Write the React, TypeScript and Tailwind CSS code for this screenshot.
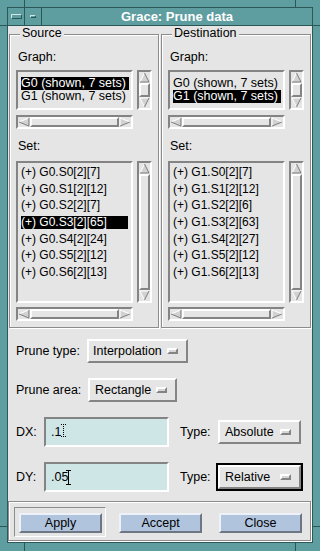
import React from "react";

const raised = "border-2 border-t-white border-l-white border-r-[#848484] border-b-[#848484]";
const sunken = "border-2 border-t-[#848484] border-l-[#848484] border-r-white border-b-white";
const etched = "border border-[#8c8c8c] shadow-[inset_1px_1px_0_#ffffff,1px_1px_0_#ffffff]";

type Dir = "up" | "down" | "left" | "right";

const arrowShapes: Record<Dir, { fill: string; light: string; dark: string }> = {
  up: { fill: "5.5,1 1,10 10,10", light: "M5.5 1L1 10", dark: "M5.5 1L10 10H1" },
  down: { fill: "1,1 10,1 5.5,10", light: "M5.5 10L1 1H10", dark: "M10 1L5.5 10" },
  left: { fill: "1,5.5 10,1 10,10", light: "M10 1L1 5.5", dark: "M1 5.5L10 10V1" },
  right: { fill: "1,1 1,10 10,5.5", light: "M1 10V1L10 5.5", dark: "M10 5.5L1 10" },
};

function Arrow({ dir, className }: { dir: Dir; className: string }) {
  const s = arrowShapes[dir];
  return (
    <svg viewBox="0 0 11 11" preserveAspectRatio="none" className={`block shrink-0 ${className}`}>
      <polygon points={s.fill} fill="#d2d2d2" />
      <path d={s.light} fill="none" stroke="#ffffff" strokeWidth="1" vectorEffect="non-scaling-stroke" />
      <path d={s.dark} fill="none" stroke="#7c7c7c" strokeWidth="1" vectorEffect="non-scaling-stroke" />
    </svg>
  );
}

function VScroll({ className }: { className: string }) {
  return (
    <div className={`w-[15px] ${sunken} flex flex-col ${className}`}>
      <Arrow dir="up" className="w-[11px] h-[11px]" />
      <div className={`flex-1 ${raised}`} />
      <Arrow dir="down" className="w-[11px] h-[11px]" />
    </div>
  );
}

function HScroll() {
  return (
    <div className={`w-[117px] h-[14px] ${sunken} flex`}>
      <Arrow dir="left" className="w-[12px] h-[10px]" />
      <div className={`flex-1 ${raised}`} />
      <Arrow dir="right" className="w-[12px] h-[10px]" />
    </div>
  );
}

function Panel({ title, graphSel, sets, setSel }: { title: string; graphSel: number; sets: string[]; setSel: number }) {
  const graphs = ["G0 (shown, 7 sets)", "G1 (shown, 7 sets)"];
  return (
    <div className={`relative w-[150px] h-[294px] ${etched} pl-[6px] pt-[15px]`}>
      <span className="absolute left-[10px] top-[-9px] px-[2px] bg-[#e5e5e5] leading-[15px]">{title}</span>
      <div className="pl-[2px] h-[15px] leading-[15px]">Graph:</div>
      <div className="mt-[5px] flex gap-[4px]">
        <div className={`w-[117px] h-[40px] ${sunken} pl-[3px] pr-[2px] pt-[5px]`}>
          {graphs.map((g, i) => (
            <div
              key={g}
              className={`h-[13px] leading-[12px] whitespace-nowrap ${i === graphSel ? "bg-black text-white" : ""}`}
            >
              {g}
            </div>
          ))}
        </div>
        <VScroll className="h-[40px]" />
      </div>
      <div className="mt-[5px]">
        <HScroll />
      </div>
      <div className="mt-[10px] pl-[2px] h-[15px] leading-[15px]">Set:</div>
      <div className="mt-[7px] flex gap-[4px]">
        <div className={`w-[117px] h-[142px] ${sunken} pl-[3px] pr-[3px] pt-[3px] text-[12px]`}>
          {sets.map((s, i) => (
            <div key={s} className="h-[16.667px]">
              <div className={`h-[13px] leading-[13px] whitespace-nowrap ${i === setSel ? "bg-black text-white" : ""}`}>
                {s}
              </div>
            </div>
          ))}
        </div>
        <VScroll className="h-[142px]" />
      </div>
      <div className="mt-[4px]">
        <HScroll />
      </div>
    </div>
  );
}

function Indicator() {
  return <div className="w-[11px] h-[6px] border-2 border-t-white border-l-white border-r-[#848484] border-b-[#848484] bg-[#d6d6d6]" />;
}

function OptionButton({ label, className }: { label: string; className: string }) {
  return (
    <div className={`h-[24px] ${raised} bg-[#e5e5e5] flex items-center justify-between pr-[8px] ${className}`}>
      <span className="whitespace-nowrap">{label}</span>
      <Indicator />
    </div>
  );
}

function Cursor() {
  return (
    <svg width="5" height="15" viewBox="0 0 5 15" className="block ml-[-2px]">
      <rect x="0" y="0" width="5" height="1" fill="#000" />
      <rect x="2" y="0" width="1" height="15" fill="#000" />
      <rect x="0" y="14" width="5" height="1" fill="#000" />
    </svg>
  );
}

function DottedCursor() {
  const dots = [
    [0, 0], [2, 0], [4, 0],
    [2, 2], [2, 4], [2, 6], [2, 8], [2, 10],
    [0, 12], [2, 12], [4, 12],
  ];
  return (
    <svg width="5" height="13" viewBox="0 0 5 13" className="block mt-[-3px]">
      {dots.map(([x, y]) => (
        <rect key={`${x}-${y}`} x={x} y={y} width="1" height="1" fill="#000" />
      ))}
    </svg>
  );
}

function ValueRow({ label, value, type, focused, active }: { label: string; value: string; type: string; focused: boolean; active: boolean }) {
  return (
    <div className="ml-[8px] flex items-center h-[30px]">
      <span className="w-[28px]">{label}</span>
      <div className={`w-[125px] h-[30px] ${sunken} bg-[#cfe6e6] flex items-center pl-[5px]`}>
        <span>{value}</span>
        {active ? <Cursor /> : <DottedCursor />}
      </div>
      <span className="ml-[11px] w-[36px]">Type:</span>
      <div className={`border-2 ${focused ? "border-black" : "border-transparent"}`}>
        <OptionButton label={type} className="w-[83px] pl-[5px]" />
      </div>
    </div>
  );
}

function PushButton({ label }: { label: string }) {
  return (
    <div className="w-[83px] h-[20px] border-2 border-t-[#eef2f8] border-l-[#eef2f8] border-r-[#6e7684] border-b-[#6e7684] bg-[#b0c4de] flex items-center justify-center">
      {label}
    </div>
  );
}

export default function App() {
  const frameDark = "bg-[#2b5757]";
  return (
    <div className="relative w-[320px] h-[551px] bg-[#5f9ea0] pt-[7px] px-[7px] pb-[8px] font-['Liberation_Sans',Arial,sans-serif] text-[12.5px] text-black overflow-hidden">
      {/* frame corner marks */}
      <div className={`absolute left-[24px] top-0 w-px h-[7px] ${frameDark}`} />
      <div className={`absolute left-[295px] top-0 w-px h-[7px] ${frameDark}`} />
      <div className={`absolute left-[24px] bottom-0 w-px h-[8px] ${frameDark}`} />
      <div className={`absolute left-[295px] bottom-0 w-px h-[8px] ${frameDark}`} />
      <div className={`absolute left-0 top-[25px] w-[7px] h-px ${frameDark}`} />
      <div className={`absolute right-0 top-[25px] w-[7px] h-px ${frameDark}`} />
      <div className={`absolute left-0 top-[526px] w-[7px] h-px ${frameDark}`} />
      <div className={`absolute right-0 top-[526px] w-[7px] h-px ${frameDark}`} />

      <div className="h-full border border-[#2b5757] flex flex-col">
        {/* title bar */}
        <div className="flex h-[18px] border-b border-[#2b5757] shrink-0">
          <div className="w-[17px] border-r border-[#2b5757] flex items-center justify-center">
            <div className="w-[11px] h-[5px] border border-t-[#cfe6e6] border-l-[#cfe6e6] border-r-[#2b5757] border-b-[#2b5757]" />
          </div>
          <div className="w-[17px] border-r border-[#2b5757] flex items-center justify-center">
            <div className="w-[6px] h-[3px] border border-t-[#cfe6e6] border-l-[#cfe6e6] border-r-[#2b5757] border-b-[#2b5757]" />
          </div>
          <div className="flex-1 flex items-center justify-center text-white font-bold text-[13px] leading-[17px]">
            Grace: Prune data
          </div>
        </div>

        {/* dialog body */}
        <div className="flex-1 bg-[#e5e5e5] flex flex-col">
          <div className="mt-[8px] ml-[1px] flex gap-[2px]">
            <Panel
              title="Source"
              graphSel={0}
              setSel={3}
              sets={[
                "(+) G0.S0[2][7]",
                "(+) G0.S1[2][12]",
                "(+) G0.S2[2][7]",
                "(+) G0.S3[2][65]",
                "(+) G0.S4[2][24]",
                "(+) G0.S5[2][12]",
                "(+) G0.S6[2][13]",
              ]}
            />
            <Panel
              title="Destination"
              graphSel={1}
              setSel={-1}
              sets={[
                "(+) G1.S0[2][7]",
                "(+) G1.S1[2][12]",
                "(+) G1.S2[2][6]",
                "(+) G1.S3[2][63]",
                "(+) G1.S4[2][27]",
                "(+) G1.S5[2][12]",
                "(+) G1.S6[2][13]",
              ]}
            />
          </div>

          <div className="mt-[11px] ml-[8px] flex items-center h-[24px]">
            <span className="w-[71px]">Prune type:</span>
            <OptionButton label="Interpolation" className="w-[101px] pl-[4px]" />
          </div>
          <div className="mt-[15px] ml-[8px] flex items-center h-[24px]">
            <span className="w-[72px]">Prune area:</span>
            <OptionButton label="Rectangle" className="w-[89px] pl-[5px]" />
          </div>

          <div className="mt-[15px]">
            <ValueRow label="DX:" value=".1" type="Absolute" focused={false} active={false} />
          </div>
          <div className="mt-[15px]">
            <ValueRow label="DY:" value=".05" type="Relative" focused={true} active={true} />
          </div>

          {/* action area */}
          <div className={`mt-[9px] w-[303px] h-[40px] ${etched} flex items-start pl-[5px] pt-[5px]`}>
            <div className="w-[92px] h-[30px] border border-t-[#8c8c8c] border-l-[#8c8c8c] border-r-white border-b-white pl-[4px] pt-[5px]">
              <PushButton label="Apply" />
            </div>
            <div className="ml-[13px] mt-[6px]">
              <PushButton label="Accept" />
            </div>
            <div className="ml-[17px] mt-[6px]">
              <PushButton label="Close" />
            </div>
          </div>
        </div>
      </div>
    </div>
  );
}
